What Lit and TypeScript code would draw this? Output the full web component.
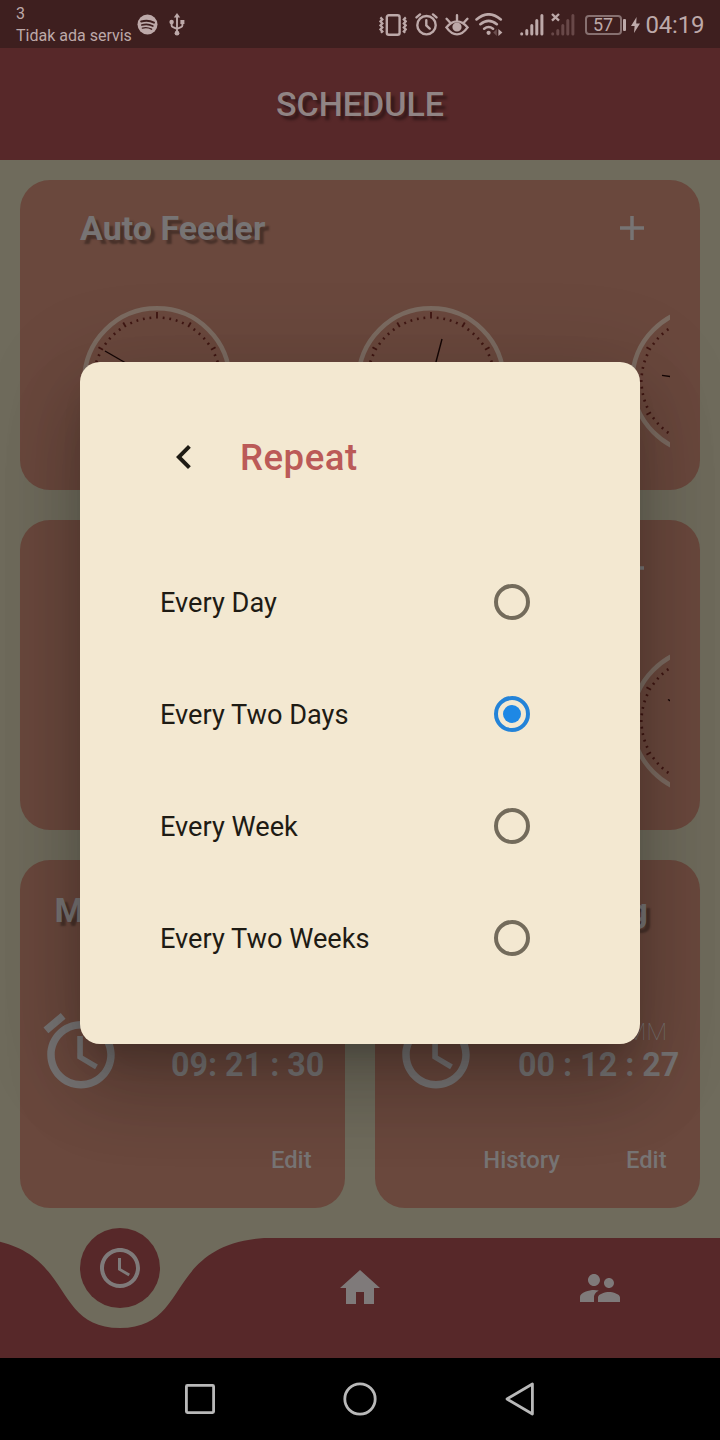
import { LitElement, html, svg, css } from "lit";
import { customElement, property, state } from "lit/decorators.js";

const ALARM =
  "M22 5.72l-4.6-3.86-1.29 1.53 4.6 3.86L22 5.72zM7.88 3.39L6.6 1.86 2 5.71l1.29 1.53 4.59-3.85zM12.5 8H11v6l4.75 2.85.75-1.23-4-2.37V8zM12 4c-4.97 0-9 4.03-9 9s4.02 9 9 9c4.97 0 9-4.03 9-9s-4.03-9-9-9zm0 16c-3.87 0-7-3.13-7-7s3.13-7 7-7 7 3.13 7 7-3.13 7-7 7z";
const SCHEDULE =
  "M11.99 2C6.47 2 2 6.48 2 12s4.47 10 9.99 10C17.52 22 22 17.52 22 12S17.52 2 11.99 2zM12 20c-4.42 0-8-3.58-8-8s3.58-8 8-8 8 3.58 8 8-3.58 8-8 8zm.5-13H11v6l5.25 3.15.75-1.23-4.5-2.67z";
const HOME = "M10 20v-6h4v6h5v-8h3L12 3 2 12h3v8z";
const PEOPLE =
  "M16.5 12c1.38 0 2.49-1.12 2.49-2.5S17.88 7 16.5 7C15.12 7 14 8.12 14 9.5s1.12 2.5 2.5 2.5zM9 11c1.66 0 2.99-1.34 2.99-3S10.66 5 9 5C7.34 5 6 6.34 6 8s1.34 3 3 3zm7.5 3c-1.83 0-5.5.92-5.5 2.75V19h11v-2.25c0-1.83-3.67-2.75-5.5-2.75zM9 13c-2.33 0-7 1.17-7 3.5V19h7v-2.25c0-.85.33-2.34 2.37-3.47C10.5 13.1 9.66 13 9 13z";
const CHEVRON = "M15.41 7.41L14 6l-6 6 6 6 1.41-1.41L10.83 12z";

const icon = (d: string, size: number) =>
  html`<svg width=${size} height=${size} viewBox="0 0 24 24" fill="currentColor"><path d=${d}></path></svg>`;

@customElement("clock-face")
class ClockFace extends LitElement {
  /** Tip of the hand, relative to the centre of the dial. */
  @property({ attribute: false }) tip: [number, number] = [0, -40];

  static styles = css`
    :host { display: block; width: 150px; height: 150px; flex: none; }
    svg { display: block; }
    .ring { fill: none; stroke: #7b6b61; stroke-width: 4.5; }
    .tick { stroke: #3f1612; stroke-width: 1.8; }
    .hand { stroke: #150605; stroke-width: 1.4; }
  `;

  render() {
    const ticks = Array.from({ length: 60 }, (_, i) => {
      const major = i % 5 === 0;
      const quarter = i % 15 === 0;
      return svg`<line class="tick" x1="0" x2="0" y1=${quarter ? -69 : major ? -67.6 : -64.8} y2=${major ? -62.4 : -62.2}
        transform="rotate(${i * 6})"></line>`;
    });
    return html`<svg width="150" height="150" viewBox="-75 -75 150 150">
      <circle class="ring" r="72.7"></circle>
      ${ticks}
      <line class="hand" x1="0" y1="0" x2=${this.tip[0]} y2=${this.tip[1]}></line>
    </svg>`;
  }
}

@customElement("status-bar")
class StatusBar extends LitElement {
  static styles = css`
    :host {
      display: flex; align-items: center; height: 48px; box-sizing: border-box;
      padding: 1px 0 0 16px; background: #3e1f1f; color: #bda9a9; flex: none;
    }
    svg { display: block; flex: none; }
    .carrier { font-size: 16px; line-height: 22px; width: 116px; white-space: nowrap; }
    .spotify { margin-left: 5px; }
    .usb { margin-left: 11px; }
    .vibrate { margin-left: 194px; }
    .alarm { margin-left: 7.5px; }
    .eye { margin-left: 7.5px; }
    .wifi { margin-left: 6px; }
    .sim1 { margin-left: 17px; }
    .sim2 { margin-left: 6.5px; }
    .battery {
      margin-left: 10px; width: 37px; height: 20px; box-sizing: border-box; border: 2px solid #877070;
      border-radius: 4px; font-size: 18px; line-height: 16px; text-align: center; flex: none;
    }
    .cap { width: 3px; height: 12px; margin-left: 1px; background: #bda9a9; border-radius: 1px; flex: none; }
    .bolt { margin-left: 5px; }
    .time { margin-left: 6px; font-size: 24px; letter-spacing: -0.2px; line-height: 46px; padding-top: 1px; }
  `;

  render() {
    return html`
      <div class="carrier">3<br />Tidak ada servis</div>
      <svg class="spotify" width="21" height="21" viewBox="0 0 21 21">
        <circle cx="10.5" cy="10.5" r="10" fill="currentColor"></circle>
        <g fill="none" stroke="#3e1f1f" stroke-linecap="round">
          <path stroke-width="2" d="M4.2 7.5Q11 5.4 17 8.6"></path>
          <path stroke-width="1.7" d="M4.8 11Q10.6 9.2 15.8 12"></path>
          <path stroke-width="1.4" d="M5.4 14.1Q10.2 12.8 14.6 15.2"></path>
        </g>
      </svg>
      <svg class="usb" width="16" height="24" viewBox="0 0 16 24" fill="currentColor">
        <path d="M8 0l3.2 4.6H4.8z"></path>
        <circle cx="8" cy="20.2" r="2.4"></circle>
        <circle cx="2.6" cy="9" r="2.2"></circle>
        <path d="M11.4 7h4v4h-4z"></path>
        <path fill="none" stroke="currentColor" stroke-width="1.9" d="M8 3v16M2.6 10v2.2q0 1.5 1.4 2L8 15.8M13.4 10v2.2q0 1.5-1.4 2L8 15.8"></path>
      </svg>
      <svg class="vibrate" width="28" height="22" viewBox="0 0 28 22" fill="none" stroke="currentColor">
        <rect x="7.8" y="1.2" width="12.8" height="19.6" rx="2" stroke-width="2.4"></rect>
        <path stroke-width="2.2" d="M1.4 3.4l2 2-2 2 2 2-2 2 2 2-2 2 2 2-1.4 1.4M26.8 3.4l-2 2 2 2-2 2 2 2-2 2 2 2-2 2 1.4 1.4"></path>
      </svg>
      <svg class="alarm" width="23" height="23" viewBox="0 0 23 23" fill="none" stroke="currentColor" stroke-linecap="round">
        <circle cx="11.5" cy="12.2" r="9.2" stroke-width="2.4"></circle>
        <path stroke-width="2.4" d="M11.3 7.2v5.2l3.4 3.2M1.5 4.4L5 1.4M21.5 4.4L18 1.4"></path>
      </svg>
      <svg class="eye" width="24" height="22" viewBox="0 0 24 22" fill="none" stroke="currentColor" stroke-width="2.4" stroke-linecap="round">
        <path d="M1.4 13.4Q6.4 7.4 12 7.4t10.6 6Q17.6 20.4 12 20.4T1.4 13.4zM12 6V1.2M4.8 8.2L1.6 4.8M19.2 8.2l3.2-3.4"></path>
        <circle cx="12" cy="13" r="3.4" fill="currentColor"></circle>
      </svg>
      <svg class="wifi" width="28" height="23" viewBox="0 0 28 23" fill="none" stroke="currentColor" stroke-width="2.6" stroke-linecap="round">
        <path d="M1.5 6.4Q13.6-3.8 25.8 6.4M5.4 11.2q8.2-6.8 16.4 0M9.2 15.7q4.4-3.4 8.8 0"></path>
        <circle cx="13.6" cy="19.8" r="2.1" fill="currentColor" stroke="none"></circle>
        <path d="M23.4 16l4 3.6-4 3.4z" fill="currentColor" stroke="none"></path>
        <path d="M21.8 16l-3.6 3.6 3.6 3.4z" fill="#6b4e4e" stroke="none"></path>
      </svg>
      <svg class="sim1" width="24" height="23" viewBox="0 0 24 23" stroke="currentColor" stroke-width="3" stroke-linecap="round">
        <path d="M1.7 20.7v.3M6.8 17.6V21M11.8 12.6V21M16.8 7.6V21M21.9 2.4V21"></path>
      </svg>
      <svg class="sim2" width="24" height="23" viewBox="0 0 24 23" stroke="#684848" stroke-width="3" stroke-linecap="round">
        <path d="M1.7 20.7v.3M6.8 17.6V21M11.8 12.6V21M16.8 7.6V21M21.9 2.4V21"></path>
        <path stroke="currentColor" stroke-width="2.4" stroke-linecap="butt" d="M1 1l7 6.6M8 1L1 7.6"></path>
      </svg>
      <div class="battery">57</div>
      <div class="cap"></div>
      <svg class="bolt" width="9" height="16" viewBox="0 0 9 16" fill="currentColor"><path d="M5.6 0L0 9h3.6L3 16l6-9.4H5.2z"></path></svg>
      <div class="time">04:19</div>
    `;
  }
}

@customElement("repeat-dialog")
class RepeatDialog extends LitElement {
  @state() private selected = 1;
  private options = ["Every Day", "Every Two Days", "Every Week", "Every Two Weeks"];

  static styles = css`
    :host {
      display: block; box-sizing: border-box; width: 560px; height: 682px; padding: 71px 80px 0;
      border-radius: 20px; background: #f3e8d1; color: #1e1b14;
      box-shadow: 0 22px 30px -14px rgba(0, 0, 0, 0.2), 0 48px 76px 6px rgba(0, 0, 0, 0.14),
        0 18px 92px 16px rgba(0, 0, 0, 0.12);
    }
    .head { display: flex; align-items: center; height: 48px; gap: 32px; margin-bottom: 65px; }
    .title { font-size: 36.6px; font-weight: 500; letter-spacing: 0.5px; color: #bb5a58; line-height: 48px; padding-top: 1px; }
    .row {
      display: flex; align-items: center; justify-content: space-between; height: 112px;
      padding-right: 30px; font-size: 27.2px; cursor: pointer;
    }
    .label { padding-top: 2px; }
    .radio {
      width: 36px; height: 36px; box-sizing: border-box; border: 4px solid #736b5b; border-radius: 50%;
      display: grid; place-items: center;
    }
    .radio.on { border-color: #2383d8; }
    .dot { width: 18px; height: 18px; border-radius: 50%; background: #1e88e5; }
    svg { display: block; }
  `;

  render() {
    return html`
      <div class="head">${icon(CHEVRON, 48)}<div class="title">Repeat</div></div>
      ${this.options.map(
        (label, i) => html`<div class="row" @click=${() => (this.selected = i)}>
          <span class="label">${label}</span>
          <span class="radio ${i === this.selected ? "on" : ""}">${i === this.selected ? html`<span class="dot"></span>` : ""}</span>
        </div>`
      )}
    `;
  }
}

@customElement("app-root")
class AppRoot extends LitElement {
  static styles = css`
    :host {
      display: flex; flex-direction: column; position: relative; width: 720px; height: 1440px; overflow: hidden;
      background: #6f6b5c; font-family: Roboto, "Liberation Sans", sans-serif; color: #777474;
    }
    svg { display: block; }
    .appbar {
      height: 112px; flex: none; background: #572829; color: #908484; display: grid; place-items: center;
      font-size: 34px; font-weight: 500; text-shadow: 4px 4px 3px rgba(0, 0, 0, 0.4);
    }
    .page { flex: 1; display: flex; flex-direction: column; gap: 30px; padding: 20px 20px 0; }
    .card { background: #6a483d; border-radius: 30px; }
    .wide { height: 310px; box-sizing: border-box; padding: 0 30px; }
    .wide-head { display: flex; align-items: center; justify-content: space-between; height: 96px; padding: 0 26px 0 30px; }
    .name { font-size: 34px; font-weight: 700; text-shadow: 4px 4px 2px rgba(0, 0, 0, 0.32); }
    .plus { width: 24px; height: 24px; }
    .strip { display: flex; gap: 124px; overflow: hidden; padding: 30px 0 0 32px; }
    .pair { display: grid; grid-template-columns: 1fr 1fr; gap: 30px; }
    .small { height: 348px; display: flex; flex-direction: column; box-sizing: border-box; }
    .small-head { height: 100px; padding: 0 52px 0 34.6px; display: flex; align-items: center; }
    .end { justify-content: flex-end; }
    .body { display: flex; justify-content: space-between; height: 90px; margin-top: 46px; padding-left: 16px; }
    .clock { display: flex; flex-direction: column; justify-content: flex-end; align-items: flex-end; padding-right: 20.6px; }
    .unit { font-size: 24px; font-weight: 100; line-height: 28px; padding-right: 12.4px; }
    .time { font-size: 32.3px; font-weight: 700; line-height: 38px; margin-bottom: 12px; white-space: pre; }
    .actions { display: flex; justify-content: flex-end; gap: 66px; padding: 50px 33.4px 0 0; font-size: 23.8px; font-weight: 500; line-height: 28px; }
    .nav { height: 120px; flex: none; position: relative; }
    .wave { position: absolute; inset: 0; }
    .items { position: relative; display: grid; grid-template-columns: repeat(3, 240px); justify-items: center; padding-top: 26px; color: #7f7a7a; }
    .bubble {
      width: 80px; height: 80px; border-radius: 50%; background: #572829; display: grid; place-items: center;
      margin-top: -36px;
    }
    .system { height: 82px; flex: none; background: #000; display: flex; justify-content: center; align-items: center; gap: 124px; }
    .system svg { stroke: #b9b9b9; stroke-width: 2.8; fill: none; stroke-linejoin: round; }
    .overlay { position: absolute; left: 80px; top: 362px; }
    .stage { position: absolute; inset: 0 0 82px; overflow: hidden; }
  `;

  private plus() {
    return html`<svg class="plus" viewBox="0 0 24 24" stroke="currentColor" stroke-width="3.5"><path d="M12 0v24M0 12h24"></path></svg>`;
  }

  render() {
    return html`
      <status-bar></status-bar>
      <div class="appbar">SCHEDULE</div>
      <div class="page">
        <div class="card wide">
          <div class="wide-head"><span class="name">Auto Feeder</span>${this.plus()}</div>
          <div class="strip">
            <clock-face .tip=${[-52, -30]}></clock-face>
            <clock-face .tip=${[11, -42]}></clock-face>
            <clock-face .tip=${[-43, -5.6]}></clock-face>
          </div>
        </div>
        <div class="card wide">
          <div class="wide-head"><span></span>${this.plus()}</div>
          <div class="strip">
            <clock-face></clock-face>
            <clock-face></clock-face>
            <clock-face .tip=${[-37, -21.5]}></clock-face>
          </div>
        </div>
        <div class="pair">
          <div class="card small">
            <div class="small-head name">M</div>
            <div class="body">${icon(ALARM, 90)}<div class="clock"><div class="time">09: 21 : 30</div></div></div>
            <div class="actions"><span>Edit</span></div>
          </div>
          <div class="card small">
            <div class="small-head name end">g</div>
            <div class="body">
              ${icon(ALARM, 90)}
              <div class="clock"><div class="unit">MM</div><div class="time">00 : 12 : 27</div></div>
            </div>
            <div class="actions"><span>History</span><span>Edit</span></div>
          </div>
        </div>
      </div>
      <div class="nav">
        <svg class="wave" width="720" height="120" viewBox="0 0 720 120">
          <path fill="#572829" d="M-24 0C76.8 7.5 48 90 120 90S163.2 7.5 264 0H720V120H-24z"></path>
        </svg>
        <div class="items">
          <div class="bubble">${icon(SCHEDULE, 48)}</div>
          ${icon(HOME, 48)} ${icon(PEOPLE, 48)}
        </div>
      </div>
      <div class="system">
        <svg width="36" height="36" viewBox="-18 -18 36 36"><rect x="-13.6" y="-13.6" width="27.2" height="27.2" rx="1"></rect></svg>
        <svg width="36" height="36" viewBox="-18 -18 36 36"><circle r="15.2"></circle></svg>
        <svg width="36" height="36" viewBox="-18 -18 36 36"><path d="M-13 0L12.4-15V15z"></path></svg>
      </div>
      <div class="stage"><repeat-dialog class="overlay"></repeat-dialog></div>
    `;
  }
}
